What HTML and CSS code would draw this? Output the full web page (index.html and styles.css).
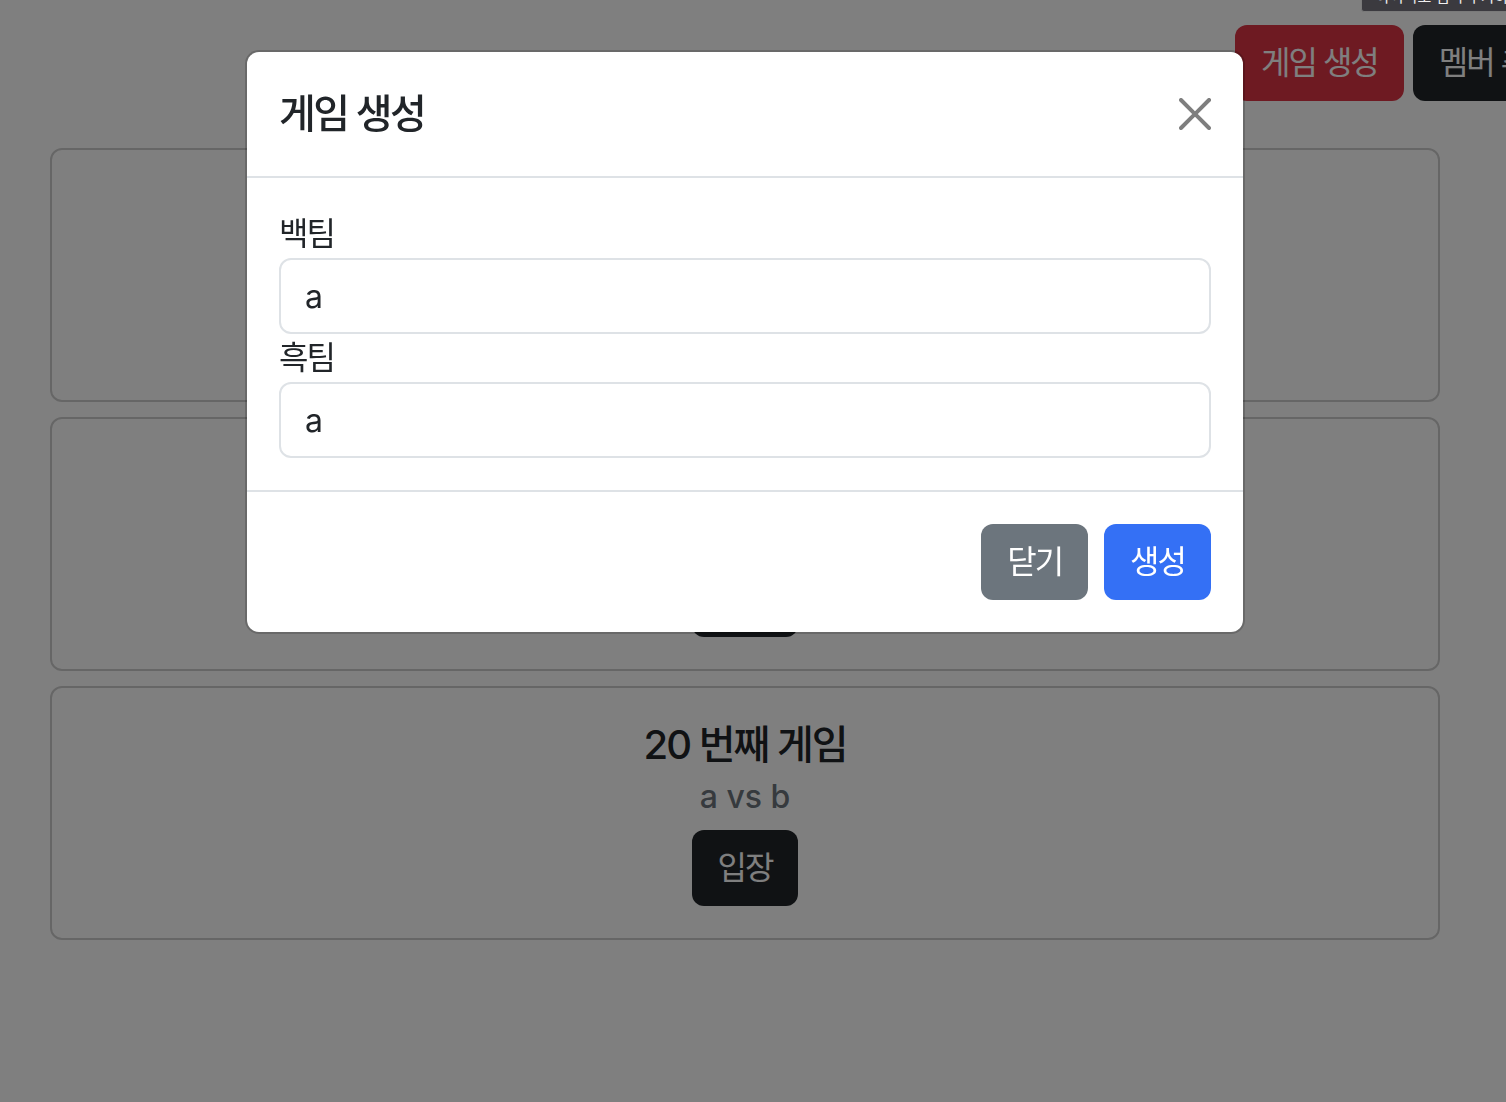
FILE: index.html
```html
<!DOCTYPE html>
<html lang="ko">
<head>
<meta charset="utf-8">
<title>게임 목록</title>
<link rel="stylesheet" href="styles.css">
</head>
<body>
<div class="native-tip">아이디로 멤버 추가하기</div>
<header class="topbar">
  <button class="btn btn-danger">게임 생성</button>
  <button class="btn btn-dark">멤버 추가</button>
</header>
<main class="cards">
  <section class="card">
    <h5 class="card-title">22 번째 게임</h5>
    <h6 class="card-subtitle">a vs b</h6>
    <button class="btn btn-dark">입장</button>
  </section>
  <section class="card">
    <h5 class="card-title">21 번째 게임</h5>
    <h6 class="card-subtitle">a vs b</h6>
    <button class="btn btn-dark">입장</button>
  </section>
  <section class="card">
    <h5 class="card-title">20 번째 게임</h5>
    <h6 class="card-subtitle">a vs b</h6>
    <button class="btn btn-dark">입장</button>
  </section>
</main>
<div class="backdrop"></div>
<div class="modal">
  <div class="modal-header">
    <h5 class="modal-title">게임 생성</h5>
    <button class="btn-close" aria-label="Close">
      <svg viewBox="0 0 16 16" width="32" height="32"><path d="M.293.293a1 1 0 0 1 1.414 0L8 6.586 14.293.293a1 1 0 1 1 1.414 1.414L9.414 8l6.293 6.293a1 1 0 0 1-1.414 1.414L8 9.414l-6.293 6.293a1 1 0 0 1-1.414-1.414L6.586 8 .293 1.707a1 1 0 0 1 0-1.414z"/></svg>
    </button>
  </div>
  <div class="modal-body">
    <label class="label">백팀</label>
    <input class="form-control" value="a">
    <label class="label">흑팀</label>
    <input class="form-control" value="a">
  </div>
  <div class="modal-footer">
    <button class="btn btn-secondary">닫기</button>
    <button class="btn btn-primary">생성</button>
  </div>
</div>
</body>
</html>
```
FILE: styles.css
```css
html, body {
  margin: 0;
  padding: 0;
  overflow: hidden;
  height: 100%;
}
body {
  background: #fff;
  color: #212529;
  font-family: Inter, "Noto Sans CJK KR", "Noto Sans", sans-serif;
  font-size: 32px;
  line-height: 1.5;
}
.btn {
  font-family: inherit;
  font-size: 32px;
  line-height: 48px;
  padding: 12px 24px;
  border: 2px solid transparent;
  border-radius: 12px;
  color: #fff;
  letter-spacing: -2px;
  white-space: nowrap;
  cursor: pointer;
  flex: none;
}
.btn-danger { background: #dc3545; }
.btn-dark { background: #212529; }
.btn-secondary { background: #6c757d; }
.btn-primary { background: #3470f5; }

.topbar {
  display: flex;
  gap: 9px;
  padding: 25px 0 0 1235px;
  white-space: nowrap;
}
.cards {
  display: flex;
  flex-direction: column;
  gap: 15px;
  margin: 47px 66px 0 50px;
}
.card {
  border: 2px solid rgba(0,0,0,.2);
  border-radius: 12px;
  padding: 32px;
  text-align: center;
}
.card-title {
  margin: 1px 0 15px;
  font-size: 40px;
  line-height: 48px;
  font-weight: 500;
  letter-spacing: -2px;
}
.card-subtitle {
  margin: -6px 0 14px;
  font-size: 32px;
  line-height: 38px;
  font-weight: 500;
  color: #6c757d;
}
.backdrop {
  position: fixed;
  inset: 0;
  background: rgba(0,0,0,.5);
}
.native-tip {
  position: fixed;
  top: -16px;
  left: 1361px;
  height: 26px;
  padding: 0 14px;
  background: #3b3a3f;
  border: 1px solid #7a7a7a;
  border-radius: 3px;
  color: #f0f0f0;
  font-size: 15px;
  line-height: 24px;
  white-space: nowrap;
  z-index: 10;
}
.modal {
  position: fixed;
  left: 245px;
  top: 50px;
  width: 1000px;
  box-sizing: border-box;
  background: #fff;
  border: 2px solid rgba(0,0,0,.175);
  border-radius: 14px;
  background-clip: padding-box;
}
.modal-header {
  display: flex;
  align-items: center;
  padding: 32px;
  border-bottom: 2px solid #dee2e6;
}
.modal-title {
  margin: 0;
  flex: 1;
  font-size: 40px;
  line-height: 60px;
  font-weight: 500;
  letter-spacing: -2.5px;
}
.btn-close {
  width: 48px;
  height: 48px;
  padding: 8px;
  margin-right: -8px;
  border: 0;
  background: transparent;
  opacity: .5;
  display: flex;
}
.btn-close svg { fill: #000; }
.modal-body {
  padding: 32px;
  display: flex;
  flex-direction: column;
}
.label {
  font-size: 32px;
  line-height: 48px;
  letter-spacing: -2px;
}
.form-control {
  box-sizing: border-box;
  width: 100%;
  height: 76px;
  padding: 12px 24px;
  border: 2px solid #dee2e6;
  border-radius: 12px;
  font-family: inherit;
  font-size: 32px;
  line-height: 48px;
  color: #212529;
  background: #fff;
}
.modal-footer {
  display: flex;
  justify-content: flex-end;
  gap: 16px;
  padding: 32px;
  border-top: 2px solid #dee2e6;
}
```
